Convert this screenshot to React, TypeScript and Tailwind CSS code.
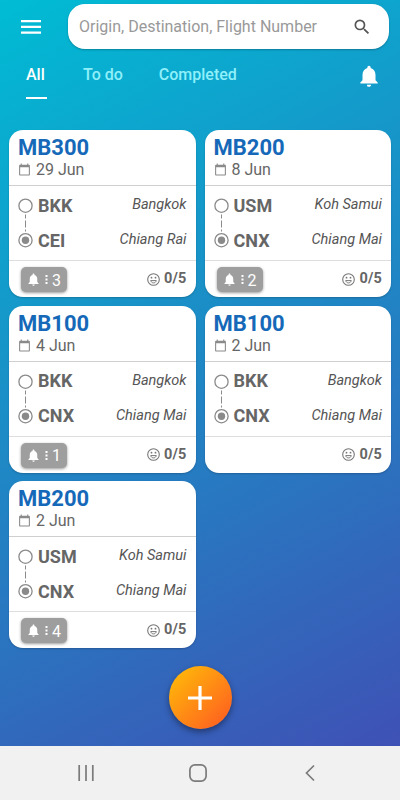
import { MdCalendarToday, MdNotifications, MdOutlineSearch } from "react-icons/md";

interface Flight {
  number: string;
  date: string;
  from: [string, string];
  to: [string, string];
  alerts?: number;
}

const flights: Flight[] = [
  { number: "MB300", date: "29 Jun", from: ["BKK", "Bangkok"], to: ["CEI", "Chiang Rai"], alerts: 3 },
  { number: "MB200", date: "8 Jun", from: ["USM", "Koh Samui"], to: ["CNX", "Chiang Mai"], alerts: 2 },
  { number: "MB100", date: "4 Jun", from: ["BKK", "Bangkok"], to: ["CNX", "Chiang Mai"], alerts: 1 },
  { number: "MB100", date: "2 Jun", from: ["BKK", "Bangkok"], to: ["CNX", "Chiang Mai"] },
  { number: "MB200", date: "2 Jun", from: ["USM", "Koh Samui"], to: ["CNX", "Chiang Mai"], alerts: 4 },
];

function RouteLine() {
  return (
    <svg width="15" height="50" viewBox="0 0 15 50" fill="none" stroke="#8a8a8a" className="shrink-0">
      <circle cx="7.5" cy="7.7" r="6.6" strokeWidth="1.3" />
      <path d="M7.5 16.5v17" strokeWidth="1" strokeDasharray="4 2 7 2" />
      <circle cx="7.5" cy="42.2" r="6.6" strokeWidth="1.3" />
      <circle cx="7.5" cy="42.2" r="3.7" fill="#8a8a8a" stroke="none" />
    </svg>
  );
}

function Smiley() {
  return (
    <svg width="13" height="13" viewBox="0 0 13 13" fill="none" stroke="#777">
      <circle cx="6.5" cy="6.5" r="5.8" strokeWidth="1.1" />
      <path d="M3.7 7.6h5.6c-.4 1.5-1.5 2.3-2.8 2.3s-2.4-.8-2.8-2.3z" strokeWidth="1" />
      <circle cx="4.5" cy="4.7" r=".9" fill="#777" stroke="none" />
      <circle cx="8.5" cy="4.7" r=".9" fill="#777" stroke="none" />
    </svg>
  );
}

function Stop({ code, city }: { code: string; city: string }) {
  return (
    <div className="flex h-5 items-center justify-between">
      <span className="text-[18px] font-bold text-[#666]">{code}</span>
      <span className="text-[14.5px] italic text-[#555]">{city}</span>
    </div>
  );
}

function FlightCard({ flight }: { flight: Flight }) {
  return (
    <div className="flex h-[167px] flex-col overflow-hidden rounded-[14px] bg-white shadow-[0_1px_2px_rgba(0,0,0,0.2)]">
      <div className="h-[56px] border-b border-[#cfcfcf] px-[9px] pt-[5px]">
        <div className="text-[22px] font-bold leading-[25px] text-[#1669b8]">{flight.number}</div>
        <div className="flex h-[19px] items-center gap-[5px]">
          <MdCalendarToday className="size-[13px] text-[#8a8a8a]" />
          <span className="text-[16px] leading-[19px] text-[#666]">{flight.date}</span>
        </div>
      </div>
      <div className="flex h-[75px] gap-[5px] border-b border-[#dedede] pl-[9px] pr-[9px] pt-[12px]">
        <RouteLine />
        <div className="flex grow flex-col gap-[15px] -mt-[3px]">
          <Stop code={flight.from[0]} city={flight.from[1]} />
          <Stop code={flight.to[0]} city={flight.to[1]} />
        </div>
      </div>
      <div className="flex h-[36px] items-center pl-3 pr-[9px]">
        {flight.alerts && (
          <div className="mt-px flex h-[25px] w-[46px] items-center rounded-[5px] bg-[#9e9e9e] pl-[5px] text-white shadow-[0_1px_3px_rgba(0,0,0,0.4)]">
            <MdNotifications className="size-[15px]" />
            <svg width="3" height="9" viewBox="0 0 3 9" fill="white" className="ml-1">
              <path d="M.5 0h2v2h-2zM.5 3.5h2v2h-2zM.5 7h2v2h-2z" />
            </svg>
            <span className="ml-[4px] mt-[2px] text-[16px] leading-none">{flight.alerts}</span>
          </div>
        )}
        <div className="ml-auto flex items-center gap-[4px]">
          <Smiley />
          <span className="text-[14.5px] font-bold tracking-[0.2px] text-[#666]">0/5</span>
        </div>
      </div>
    </div>
  );
}

export default function App() {
  return (
    <div className="flex h-[800px] w-[400px] flex-col overflow-hidden bg-[#f1f1f1] font-['Roboto',sans-serif]">
      <div className="flex h-[746px] flex-col bg-[linear-gradient(152deg,#00bcd4,#3f51b5)]">
        <header className="flex items-center pl-[21px] pr-[11px] pt-1">
          <button aria-label="Menu">
            <svg width="20" height="14" viewBox="0 0 20 14" fill="white">
              <path d="M0 0h20v2.2H0zM0 5.8h20V8H0zM0 11.6h20v2.2H0z" />
            </svg>
          </button>
          <div className="ml-[27px] flex h-[45px] grow items-center justify-between rounded-[17px] bg-white pl-[11px] pr-[17px] shadow-[0_1px_2px_rgba(0,0,0,0.25)]">
            <span className="whitespace-nowrap text-[16px] text-[#999]">Origin, Destination, Flight Number</span>
            <MdOutlineSearch className="size-5 text-[#555]" />
          </div>
        </header>

        <nav className="flex h-[50px] items-start pl-[26px] pr-[18px] pt-[14px] text-[16px] font-medium leading-[24px] text-[#8ff0fa]">
          <span className="flex w-[22px] flex-col text-white">
            <span>All</span>
            <span className="mt-[10px] h-[2px] w-[21px] shrink-0 bg-white" />
          </span>
          <span className="ml-[35px]">To do</span>
          <span className="ml-[36px]">Completed</span>
          <MdNotifications className="ml-auto size-[26px] text-white" />
        </nav>

        <main className="mt-[31px] grid grid-cols-2 gap-x-[9px] gap-y-[8.5px] px-[9px]">
          {flights.map((flight, i) => (
            <FlightCard key={i} flight={flight} />
          ))}
        </main>

        <button
          aria-label="Add flight"
          className="mx-auto mt-[18px] flex size-[63px] shrink-0 items-center justify-center rounded-full bg-[linear-gradient(135deg,#ffc107,#ff5722)] shadow-[0_3px_6px_rgba(0,0,0,0.4)]"
        >
          <svg width="24" height="24" viewBox="0 0 24 24" stroke="white" strokeWidth="3.2">
            <path d="M12 0v24M0 12h24" />
          </svg>
        </button>
      </div>

      <footer className="flex h-[54px] items-center pl-[77px]">
        <svg width="18" height="18" viewBox="0 0 18 18" stroke="#7b7b7b" strokeWidth="1.7">
          <path d="M2.2 1v16M9 1v16M15.8 1v16" />
        </svg>
        <svg width="20" height="20" viewBox="0 0 20 20" fill="none" stroke="#7b7b7b" strokeWidth="1.7" className="ml-[93px]">
          <rect x="1.9" y="1.9" width="16.2" height="16.2" rx="5" />
        </svg>
        <svg width="10" height="18" viewBox="0 0 10 18" fill="none" stroke="#7b7b7b" strokeWidth="1.7" className="ml-[97px]">
          <path d="M9 1.5L1.5 9L9 16.5" />
        </svg>
      </footer>
    </div>
  );
}
